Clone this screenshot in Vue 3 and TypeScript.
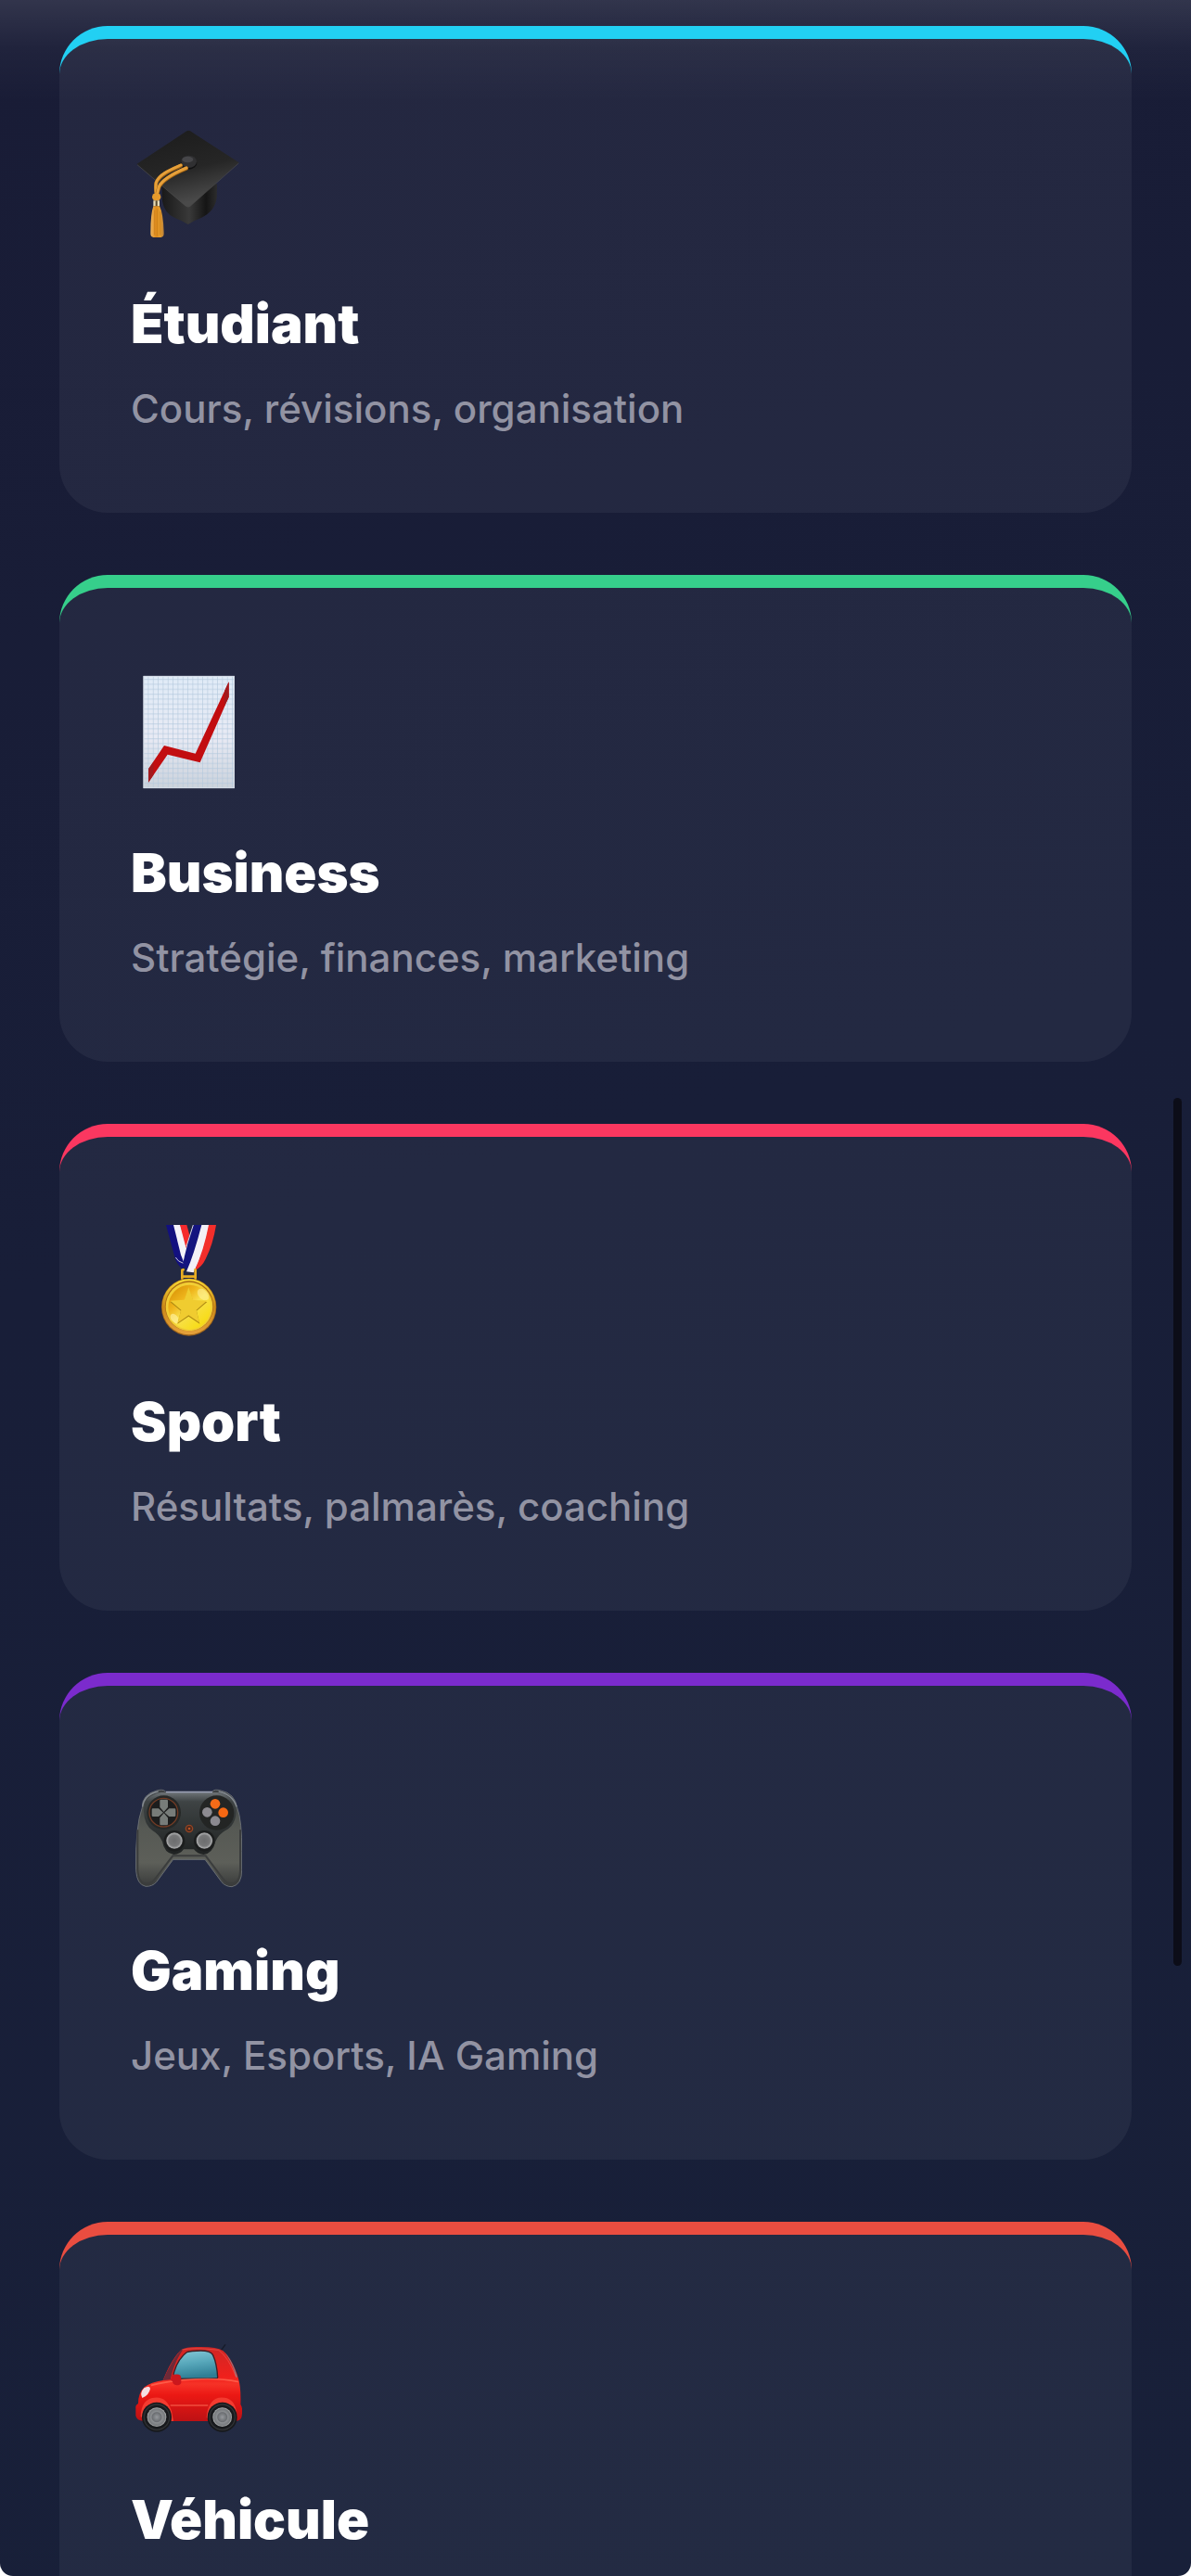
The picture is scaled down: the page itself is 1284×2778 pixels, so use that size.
<script setup lang="ts">
type IconName = 'cap' | 'chart' | 'medal' | 'gamepad' | 'car'

interface Category {
  icon: IconName
  title: string
  description?: string
  accent: string
  viewBox: string
}

const categories: Category[] = [
  { icon: 'cap', title: 'Étudiant', description: 'Cours, révisions, organisation', accent: '#22d0f3', viewBox: '426 408 360 372' },
  { icon: 'chart', title: 'Business', description: 'Stratégie, finances, marketing', accent: '#36cf8b', viewBox: '66 114 360 372' },
  { icon: 'medal', title: 'Sport', description: 'Résultats, palmarès, coaching', accent: '#fb3760', viewBox: '66 90 360 372' },
  { icon: 'gamepad', title: 'Gaming', description: 'Jeux, Esports, IA Gaming', accent: '#7b2bcd', viewBox: '66 36 360 372' },
  { icon: 'car', title: 'Véhicule', accent: '#e94d40', viewBox: '66 42 360 372' },
]
</script>

<template>
  <main class="page">
    <nav class="list" aria-label="Catégories">
      <a
        v-for="item in categories"
        :key="item.title"
        class="card"
        href="#"
        :style="{ borderTopColor: item.accent }"
      >
        <svg class="icon" :viewBox="item.viewBox" aria-hidden="true">
          <g v-if="item.icon === 'cap'">
            <defs>
              <linearGradient id="capTop" x1="0" y1="0" x2="0.3" y2="1">
                <stop offset="0" stop-color="#1b1b1b" /><stop offset="0.6" stop-color="#262626" /><stop offset="1" stop-color="#4a4a4a" />
              </linearGradient>
              <linearGradient id="capBase" x1="0" y1="0" x2="1" y2="0">
                <stop offset="0" stop-color="#191919" /><stop offset="0.5" stop-color="#393939" /><stop offset="0.8" stop-color="#151515" /><stop offset="1" stop-color="#2c2c2c" />
              </linearGradient>
              <linearGradient id="tassel" x1="0" y1="0" x2="1" y2="0">
                <stop offset="0" stop-color="#f2b65c" /><stop offset="0.4" stop-color="#dd8a1b" /><stop offset="0.7" stop-color="#e69c2b" /><stop offset="1" stop-color="#b8803a" />
              </linearGradient>
            </defs>
            <path d="M526 600 L528 650 Q534 690 570 706 Q594 715 611 726 Q628 714 655 704 Q698 684 704 640 L705 595 Z" fill="url(#capBase)" />
            <path d="M612 422 Q618 422 626 429 L776 526 L618 667 Q611 672 603 666 L445 531 L598 430 Q606 423 612 422 Z" fill="url(#capTop)" />
            <path d="M447 533 L603 666 Q611 672 618 667 L775 528" fill="none" stroke="#4d4d4d" stroke-width="2" />
            <ellipse cx="614" cy="527" rx="26" ry="21" fill="#111112" />
            <ellipse cx="614" cy="523" rx="25" ry="20" fill="#303032" />
            <ellipse cx="610" cy="516" rx="18" ry="10" fill="#464649" />
            <g fill="none" stroke-linecap="round">
              <path d="M588 536 C556 550 518 565 508 592 Q506 602 509 622" stroke="#a86814" stroke-width="12" />
              <path d="M588 534 C556 548 518 563 508 590 Q506 600 507 622" stroke="#e6a03a" stroke-width="9" />
              <path d="M606 545 C570 560 528 582 517 606 L512 624" stroke="#a86814" stroke-width="12" />
              <path d="M606 543 C570 558 528 580 517 604 L512 624" stroke="#e6a03a" stroke-width="9" />
            </g>
            <ellipse cx="509" cy="637" rx="14" ry="13" fill="#e69a2c" />
            <rect x="499" y="649" width="20" height="18" fill="#e5d9b5" />
            <path d="M506 649 h6 v18 h-6 Z" fill="#57482c" />
            <path d="M499 667 H519 Q531 690 533 752 Q534 766 524 768 H499 Q489 766 490 752 Q490 692 499 667 Z" fill="url(#tassel)" />
            <path d="M503 680 V760 M512 676 V764 M521 684 V760" stroke="#c67a17" stroke-width="2" />
          </g>

          <g v-else-if="item.icon === 'chart'">
            <defs>
              <linearGradient id="paper" x1="0" y1="0" x2="0" y2="1">
                <stop offset="0" stop-color="#e0ebf7" /><stop offset="0.55" stop-color="#e8eaf4" /><stop offset="1" stop-color="#cbd2db" />
              </linearGradient>
              <pattern id="grid" x="108" y="118" width="16" height="16" patternUnits="userSpaceOnUse">
                <path d="M15 0 V16 M0 10 H16" stroke="#b3c8dc" stroke-width="2" fill="none" />
              </pattern>
            </defs>
            <rect x="107" y="117" width="294" height="363" fill="url(#paper)" />
            <rect x="107" y="117" width="294" height="363" fill="url(#grid)" />
            <rect x="108" y="118" width="292" height="361" fill="none" stroke="#d5dde8" stroke-width="3" />
            <path d="M123 418 L174 342 L275 368 L383 136 V185 L290 397 L185 371 L123 461 Z" fill="#c20d10" />
            <path d="M123 418 L139 395 V438 L123 461 Z M383 136 L369 166 V214 L383 185 Z" fill="#a3191d" />
          </g>

          <g v-else-if="item.icon === 'medal'">
            <defs>
              <linearGradient id="rim" x1="0" y1="0" x2="0" y2="1">
                <stop offset="0" stop-color="#f9dc35" /><stop offset="0.5" stop-color="#c98718" /><stop offset="1" stop-color="#e5a13b" />
              </linearGradient>
              <linearGradient id="face" x1="0.1" y1="0.1" x2="0.8" y2="0.9">
                <stop offset="0" stop-color="#db9609" /><stop offset="0.3" stop-color="#efb51c" /><stop offset="0.55" stop-color="#f8e04d" /><stop offset="1" stop-color="#f7dc16" />
              </linearGradient>
            </defs>
            <path d="M180 93 H205 L239 207 L234 236 Q216 222 209 200 Z" fill="#12107f" />
            <path d="M204 93 H226 L250 165 L237 212 L228 190 Z" fill="#f5f3fa" />
            <path d="M225 93 H247 L256 125 L245 168 Z" fill="#f62a2d" />
            <path d="M211 198 Q218 212 236 217" fill="none" stroke="#c9c9dc" stroke-width="3" />
            <path d="M268 93 H296 L253 246 L235 226 Q234 205 268 93 Z" fill="#14147f" />
            <path d="M268 93 L246 162" stroke="#d7d7e8" stroke-width="3" />
            <path d="M295 93 H320 Q301 190 269 247 L246 244 Q270 190 295 93 Z" fill="#f3f0f7" />
            <path d="M318 93 H342 Q332 156 308 203 Q296 229 272 241 Q302 176 318 93 Z" fill="#f32e2b" />
            <path d="M232 266 V242 Q231 237 236 238 M274 238 Q276 238 275 244 V266 M232 260 H275" fill="none" stroke="#e9ae22" stroke-width="8" stroke-linecap="round" />
            <ellipse cx="254" cy="359" rx="89" ry="93" fill="#9d641b" />
            <ellipse cx="254" cy="358" rx="87" ry="90" fill="url(#rim)" />
            <ellipse cx="255" cy="355" rx="78" ry="81" fill="#a86a12" />
            <ellipse cx="255" cy="357" rx="76" ry="79" fill="#f2ce34" />
            <ellipse cx="256" cy="359" rx="69" ry="72" fill="url(#face)" />
            <ellipse cx="300" cy="318" rx="22" ry="15" fill="#fff3a0" opacity="0.55" transform="rotate(45 300 318)" />
            <ellipse cx="208" cy="396" rx="18" ry="11" fill="#fff1a0" opacity="0.65" transform="rotate(50 208 396)" />
            <path d="M253 298 L268 340 L313 342 L279 371 L289 413 L253 389 L217 413 L228 371 L193 342 L239 339 Z" fill="#b08c14" />
            <path d="M253 295 L268 336 L312 338 L278 368 L288 409 L253 385 L217 410 L229 368 L194 338 L239 335 Z" fill="#f0cc30" />
          </g>

          <g v-else-if="item.icon === 'gamepad'">
            <defs>
              <linearGradient id="shell" x1="0" y1="0" x2="0" y2="1">
                <stop offset="0" stop-color="#3c4042" /><stop offset="0.4" stop-color="#565954" /><stop offset="0.75" stop-color="#5d5f59" /><stop offset="1" stop-color="#383a3a" />
              </linearGradient>
              <linearGradient id="front" x1="0" y1="0" x2="0" y2="1">
                <stop offset="0" stop-color="#6d7376" /><stop offset="0.15" stop-color="#3e4344" /><stop offset="1" stop-color="#202323" />
              </linearGradient>
              <radialGradient id="stick">
                <stop offset="0" stop-color="#6c6d6e" /><stop offset="0.65" stop-color="#777879" /><stop offset="0.9" stop-color="#a9aaab" /><stop offset="1" stop-color="#4a4b4c" />
              </radialGradient>
            </defs>
            <path d="M103 148 Q102 105 150 93 Q170 87 178 96 H330 Q336 87 358 93 Q402 102 410 148 Q426 190 425 290 V350 Q425 398 393 404 Q373 404 360 389 L306 316 H203 L149 389 Q135 404 114 403 Q85 397 83 350 Q80 210 103 148 Z" fill="url(#shell)" stroke="#686d73" stroke-width="3" />
            <path d="M88 220 V350 Q91 395 116 395 Q133 394 145 378 L202 304 H308 L364 378 Q377 395 393 394 Q419 392 420 350 V220" fill="none" stroke="#3b3d3d" stroke-width="6" />
            <path d="M108 160 Q105 110 164 99 H346 Q400 110 407 158 Q406 205 371 223 Q350 235 340 257 Q331 296 301 300 Q281 298 270 283 H237 Q226 299 205 300 Q174 295 168 258 Q158 235 137 223 Q109 204 108 160 Z" fill="url(#front)" />
            <path d="M180 98 H330" stroke="#9ca2ba" stroke-width="4" />
            <path d="M104 145 Q109 106 155 96 M350 96 Q396 106 408 145" fill="none" stroke="#858b92" stroke-width="4" />
            <circle cx="173" cy="164" r="55" fill="#252827" />
            <circle cx="344" cy="165" r="56" fill="#232524" />
            <circle cx="172" cy="164" r="46" fill="#1c1d1d" stroke="#713b25" stroke-width="4" />
            <path d="M160 125 Q160 122 164 122 H182 Q186 122 186 126 V147 L173 162 L160 147 Z M160 202 Q160 205 164 205 H182 Q186 205 186 201 V181 L173 166 L160 181 Z M137 151 Q134 151 134 155 V173 Q134 177 138 177 H156 L171 164 L156 151 Z M208 151 Q211 151 211 155 V173 Q211 177 207 177 H190 L175 164 L190 151 Z" fill="#777c79" />
            <circle cx="339" cy="136" r="16" fill="#f66b18" />
            <circle cx="365" cy="164" r="16" fill="#f66813" />
            <circle cx="313" cy="163" r="16" fill="#8d8b91" />
            <circle cx="339" cy="191" r="16" fill="#8b8990" />
            <circle cx="255" cy="216" r="11" fill="#4b2a1f" stroke="#964523" stroke-width="4" />
            <circle cx="255" cy="216" r="4" fill="#b95325" />
            <circle cx="207" cy="256" r="34" fill="#1b1d1d" />
            <circle cx="304" cy="256" r="34" fill="#1b1d1d" />
            <circle cx="207" cy="255" r="27" fill="url(#stick)" />
            <circle cx="304" cy="255" r="27" fill="url(#stick)" />
          </g>

          <g v-else>
            <defs>
              <linearGradient id="paint" x1="0" y1="0" x2="0" y2="1">
                <stop offset="0" stop-color="#cf2725" /><stop offset="0.4" stop-color="#f0201c" /><stop offset="0.5" stop-color="#f63227" /><stop offset="0.65" stop-color="#eb1814" /><stop offset="1" stop-color="#bd1114" />
              </linearGradient>
              <linearGradient id="glass" x1="0" y1="0" x2="0.2" y2="1">
                <stop offset="0" stop-color="#86c8d8" /><stop offset="0.5" stop-color="#58a8bb" /><stop offset="1" stop-color="#2f7e95" />
              </linearGradient>
              <radialGradient id="hub">
                <stop offset="0" stop-color="#96999d" /><stop offset="0.48" stop-color="#6b6e72" /><stop offset="0.58" stop-color="#8b8e91" /><stop offset="0.85" stop-color="#777a7d" /><stop offset="1" stop-color="#b2b4b4" />
              </radialGradient>
            </defs>
            <path d="M358 134 L372 115" stroke="#171b28" stroke-width="4" />
            <path d="M82 320 Q80 312 90 306 Q90 272 110 253 Q131 237 170 231 Q198 161 229 132 Q244 123 278 123 Q342 121 364 135 Q393 158 413 222 Q423 253 421 309 Q430 320 424 351 Q420 362 403 363 H108 Q84 361 82 345 Z" fill="url(#paint)" />
            <path d="M170 231 Q199 166 229 132 L236 130 Q207 170 194 229 Z" fill="#6e2a38" />
            <path d="M372 143 Q397 172 411 222 L406 219 Q397 181 372 143 Z" fill="#80828e" />
            <path d="M201 226 Q211 168 247 140 Q260 135 292 135 Q324 135 331 148 Q344 174 347 221 Q347 225 342 225 Z" fill="url(#glass)" stroke="#3c2027" stroke-width="4" />
            <path d="M232 132 Q270 124 350 133 Q382 156 407 222" fill="none" stroke="#f56961" stroke-width="2" opacity="0.7" />
            <path d="M132 247 Q174 236 236 230 Q350 221 414 236" fill="none" stroke="#ff6651" stroke-width="5" opacity="0.8" />
            <path d="M194 312 H316" stroke="#fb6b52" stroke-width="3" />
            <path d="M199 216 Q201 211 221 212 Q229 213 229 226 V239 Q226 247 214 247 Q202 245 201 234 L194 230 Z" fill="#cb171d" />
            <path d="M103 288 Q94 272 109 256 Q127 246 129 258 Q124 281 103 288 Z" fill="#f5dfe2" />
            <path d="M98 348 Q99 298 135 288 Q180 277 198 331 L204 363 H196 Q196 310 150 302 Q106 306 103 352 Z" fill="#f33b30" />
            <path d="M311 351 Q315 297 350 287 Q397 281 407 327 L410 356 Q402 311 363 302 Q322 306 318 358 Z" fill="#f33b30" />
            <circle cx="150" cy="350" r="48" fill="#17191c" />
            <circle cx="362" cy="350" r="48" fill="#17191c" />
            <circle cx="150" cy="350" r="41" fill="none" stroke="#303235" stroke-width="4" />
            <circle cx="362" cy="350" r="41" fill="none" stroke="#303235" stroke-width="4" />
            <circle cx="150" cy="350" r="31" fill="url(#hub)" />
            <circle cx="362" cy="350" r="31" fill="url(#hub)" />
          </g>
        </svg>
        <h2 class="title">{{ item.title }}</h2>
        <p v-if="item.description" class="description">{{ item.description }}</p>
      </a>
    </nav>
    <div class="scroll-thumb" aria-hidden="true"></div>
  </main>
</template>

<style>
body {
  margin: 0;
  background: #ffffff;
}
</style>

<style scoped>
.page {
  position: relative;
  box-sizing: border-box;
  height: 100vh;
  overflow: hidden;
  padding: 28px 64px 0;
  border-radius: 0 0 14px 14px;
  background:
    linear-gradient(180deg, rgba(255, 255, 255, 0.11) 0, rgba(255, 255, 255, 0.03) 52px, rgba(255, 255, 255, 0) 110px),
    linear-gradient(165deg, #191c36 0%, #181e38 45%, #182039 100%);
  font-family: Inter, "Liberation Sans", sans-serif;
}

.list {
  display: flex;
  flex-direction: column;
  gap: 67px;
}

.card {
  display: flex;
  flex-direction: column;
  align-items: flex-start;
  box-sizing: border-box;
  padding: 94px 77px 86px;
  border-top: 14px solid;
  border-radius: 52px;
  background: rgba(255, 255, 255, 0.05);
  color: #ffffff;
  text-decoration: none;
}

.icon {
  display: block;
  width: 120px;
  height: 124px;
  margin-bottom: 54px;
}

.title {
  margin: 0;
  font-size: 58px;
  font-weight: 900;
  line-height: 70px;
}

.description {
  margin: 31px 0 0;
  color: #9293a3;
  font-size: 42px;
  font-weight: 500;
  line-height: 52px;
}

.scroll-thumb {
  position: absolute;
  top: 1184px;
  right: 10px;
  width: 9px;
  height: 936px;
  border-radius: 5px;
  background: #0c0d18;
}
</style>
